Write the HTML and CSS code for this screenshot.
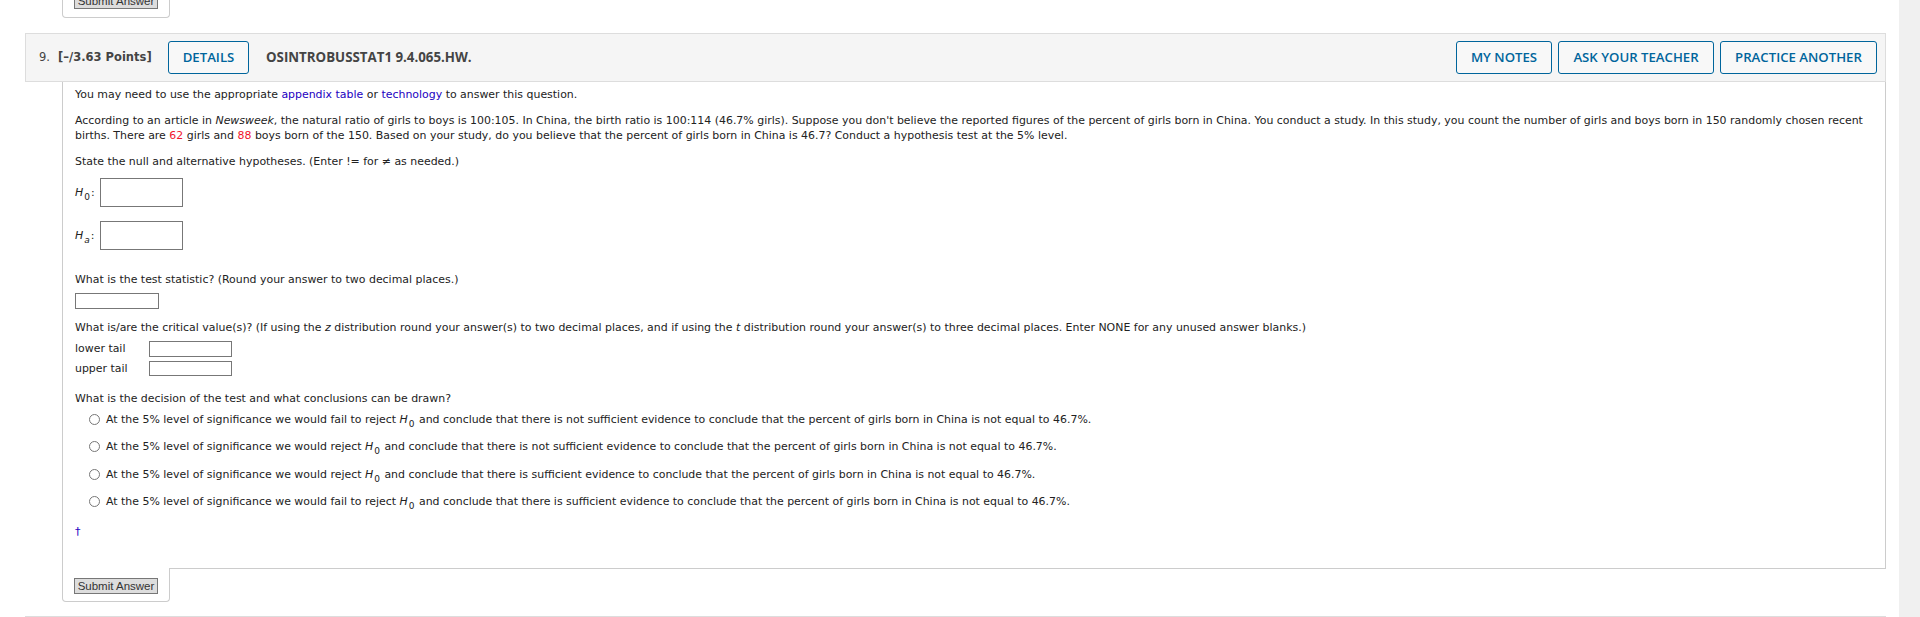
FILE: index.html
```html
<!DOCTYPE html>
<html lang="en">
<head>
	<meta charset="UTF-8">
	<title>Question 9</title>
	<link rel="stylesheet" href="styles.css">
</head>
<body>
	<div class="page">
		<div class="main">
			<!-- end of question 8 -->
			<div class="tab tab-prev">
				<button class="submit" type="button">Submit Answer</button>
			</div>

			<!-- question 9 -->
			<div class="qhead">
				<span class="qnum">9.</span>
				<span class="points">[–/3.63 Points]</span>
				<a class="btn btn-details" href="#">DETAILS</a>
				<span class="qcode">OSINTROBUSSTAT1 9.4.065.HW.</span>
				<div class="qactions">
					<a class="btn btn-notes" href="#">MY NOTES</a>
					<a class="btn btn-ask" href="#">ASK YOUR TEACHER</a>
					<a class="btn btn-practice" href="#">PRACTICE ANOTHER</a>
				</div>
			</div>

			<div class="qbody">
				<p>You may need to use the appropriate <a href="#">appendix table</a> or <a href="#">technology</a> to answer this question.</p>
				<p>According to an article in <i>Newsweek</i>, the natural ratio of girls to boys is 100:105. In China, the birth ratio is 100:114 (46.7% girls). Suppose you don't believe the reported figures of the percent of girls born in China. You conduct a study. In this study, you count the number of girls and boys born in 150 randomly chosen recent<br>births. There are <span class="red">62</span> girls and <span class="red">88</span> boys born of the 150. Based on your study, do you believe that the percent of girls born in China is 46.7? Conduct a hypothesis test at the 5% level.</p>
				<p>State the null and alternative hypotheses. (Enter != for ≠ as needed.)</p>

				<div class="hyp hyp-first">
					<span class="hyp-label"><i>H</i><sub>0</sub>:</span>
					<input class="box box-hyp" type="text">
				</div>
				<div class="hyp">
					<span class="hyp-label"><i>H</i><sub><i>a</i></sub>:</span>
					<input class="box box-hyp" type="text">
				</div>

				<p class="after-hyp">What is the test statistic? (Round your answer to two decimal places.)</p>
				<input class="box box-stat" type="text">

				<p class="after-stat">What is/are the critical value(s)? (If using the <i>z</i> distribution round your answer(s) to two decimal places, and if using the <i>t</i> distribution round your answer(s) to three decimal places. Enter NONE for any unused answer blanks.)</p>
				<div class="tails">
					<span>lower tail</span>
					<input class="box box-tail" type="text">
					<span>upper tail</span>
					<input class="box box-tail box-tail-low" type="text">
				</div>

				<p class="after-tails">What is the decision of the test and what conclusions can be drawn?</p>
				<ul class="choices">
					<li><input class="radio" type="radio" name="q9"><span>At the 5% level of significance we would fail to reject <i>H</i><sub>0</sub> and conclude that there is not sufficient evidence to conclude that the percent of girls born in China is not equal to 46.7%.</span></li>
					<li><input class="radio" type="radio" name="q9"><span>At the 5% level of significance we would reject <i>H</i><sub>0</sub> and conclude that there is not sufficient evidence to conclude that the percent of girls born in China is not equal to 46.7%.</span></li>
					<li><input class="radio" type="radio" name="q9"><span>At the 5% level of significance we would reject <i>H</i><sub>0</sub> and conclude that there is sufficient evidence to conclude that the percent of girls born in China is not equal to 46.7%.</span></li>
					<li><input class="radio" type="radio" name="q9"><span>At the 5% level of significance we would fail to reject <i>H</i><sub>0</sub> and conclude that there is sufficient evidence to conclude that the percent of girls born in China is not equal to 46.7%.</span></li>
				</ul>
				<div class="dagger"><a href="#">†</a></div>
			</div>
			<div class="tab">
				<button class="submit" type="button">Submit Answer</button>
			</div>

			<div class="qhead-next"></div>
		</div>
		<div class="scrollbar"></div>
	</div>
</body>
</html>
```

FILE: styles.css
```css
* {
	margin: 0;
	padding: 0;
	box-sizing: border-box;
}
html, body {
	height: 617px;
	overflow: hidden;
	background-color: white;
}
body {
	font-family: "DejaVu Sans", sans-serif;
	font-size: 10.95px;
	line-height: 15px;
	color: #222;
}
.page {
	display: flex;
	height: 617px;
}
.main {
	flex: 1;
	min-width: 0;
	padding: 0 13px 0 25px;
}
.scrollbar {
	width: 21px;
	background-color: #f0f0f0;
}

/* submit tabs */
.tab {
	width: 108px;
	height: 34px;
	margin-left: 37px;
	margin-top: -1px;
	padding: 10px 0 0 11px;
	position: relative;
	background-color: white;
	border: 1px solid #ccc;
	border-top: none;
	border-radius: 0 0 4px 4px;
}
.tab-prev {
	height: 18px;
	margin-top: 0;
	padding-top: 0;
	overflow: hidden;
}
.tab-prev .submit {
	margin-top: -7px;
}
.submit {
	display: block;
	width: 84px;
	height: 16px;
	font-family: "Liberation Sans", sans-serif;
	font-size: 11.5px;
	line-height: 14px;
	color: #333;
	background-color: #ddd;
	border: 1px solid #777;
}

/* question header */
.qhead {
	display: flex;
	align-items: center;
	height: 49px;
	margin-top: 15px;
	padding: 0 8px 0 13px;
	background-color: #f5f5f5;
	border: 1px solid #ddd;
	font-family: "Open Sans", sans-serif;
	font-size: 13px;
	color: #444;
}
.qnum {
	width: 19px;
	font-family: "DejaVu Sans", sans-serif;
	font-size: 11.5px;
}
.points {
	width: 110px;
	font-family: "DejaVu Sans", sans-serif;
	font-size: 11.5px;
	font-weight: bold;
}
.qcode {
	margin-left: 17px;
	font-weight: 700;
	font-size: 13.3px;
}
.qactions {
	display: flex;
	gap: 6px;
	margin-left: auto;
}
.btn {
	display: flex;
	align-items: center;
	justify-content: center;
	height: 33px;
	font-weight: 600;
	font-size: 13.2px;
	color: #00659c;
	text-decoration: none;
	background-color: #f8f8f8;
	border: 1px solid #00659c;
	border-radius: 3px;
}
.btn-details {
	width: 81px;
}
.btn-notes {
	width: 96px;
}
.btn-ask {
	width: 156px;
}
.btn-practice {
	width: 157px;
}

/* question body */
.qbody {
	height: 487px;
	margin: 0 0 0 37px;
	padding: 5px 14px 0 12px;
	border-left: 1px solid #ccc;
	border-right: 1px solid #ccc;
	border-bottom: 1px solid #ccc;
	white-space: nowrap;
}
.qbody p {
	margin-bottom: 11px;
}
.qbody a {
	color: #2200c1;
	text-decoration: none;
}
.red {
	color: #f0142d;
}
sub {
	font-size: 9px;
	line-height: 0;
	vertical-align: -4px;
	margin-left: 1px;
	margin-right: 1px;
}
.box {
	display: block;
	background-color: white;
	border: 1px solid #777;
}
.hyp {
	display: flex;
	align-items: center;
	height: 29px;
	margin-bottom: 14px;
}
.hyp-first {
	margin-top: -2.5px;
}
.hyp-label {
	width: 25px;
}
.box-hyp {
	width: 83px;
	height: 29px;
}
.qbody .after-hyp {
	margin-top: 22.5px;
	margin-bottom: 5.5px;
}
.box-stat {
	width: 84px;
	height: 16px;
}
.qbody .after-stat {
	margin-top: 11.5px;
	margin-bottom: 5.5px;
}
.tails {
	display: grid;
	grid-template-columns: 74px 83px;
	row-gap: 4px;
	align-items: center;
	width: 157px;
}
.box-tail {
	height: 16px;
}
.box-tail-low {
	height: 15px;
}
.qbody .after-tails {
	margin-top: 15.5px;
	margin-bottom: 0;
}
.choices {
	list-style-type: none;
	margin-top: 0;
}
.choices li {
	display: flex;
	align-items: center;
	height: 27.3px;
	padding-left: 14px;
}
.radio {
	appearance: none;
	width: 11px;
	height: 11px;
	margin-right: 6px;
	background-color: white;
	border: 1px solid #777;
	border-radius: 50%;
}
.dagger {
	margin-top: 9px;
	font-size: 11px;
}
.qhead-next {
	height: 30px;
	margin-top: 14px;
	border-top: 1px solid #ddd;
}
```
